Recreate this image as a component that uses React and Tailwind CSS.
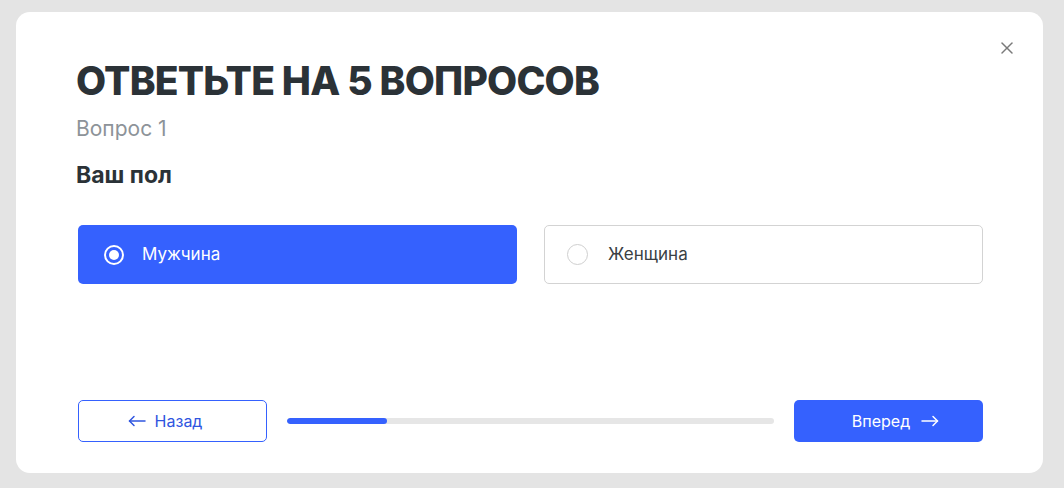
import { X } from 'lucide-react';

function Radio({ checked }) {
  return checked ? (
    <span className="w-[20px] h-[20px] rounded-full border-2 border-white flex items-center justify-center">
      <span className="w-[10px] h-[10px] rounded-full bg-white" />
    </span>
  ) : (
    <span className="w-[21px] h-[21px] rounded-full border border-[#cfcfcf] bg-white" />
  );
}

function Option({ label, checked }) {
  return (
    <button
      className={
        checked
          ? 'h-[59px] rounded-[5px] bg-[#3561fe] text-white flex items-center gap-[18px] pl-[26px] text-[17px]'
          : 'h-[59px] rounded-[5px] bg-white border border-[#d3d3d3] text-[#3a3f44] flex items-center gap-[20px] pl-[22px] text-[17px]'
      }
    >
      <Radio checked={checked} />
      <span>{label}</span>
    </button>
  );
}

function Arrow({ left }) {
  return (
    <svg width="18" height="12" viewBox="0 0 18 12" fill="none" stroke="currentColor" strokeWidth="1.5" strokeLinecap="round" strokeLinejoin="round">
      {left ? (
        <>
          <path d="M17 6H1.5" />
          <path d="M6 1.5L1.5 6L6 10.5" />
        </>
      ) : (
        <>
          <path d="M1 6h15.5" />
          <path d="M12 1.5L16.5 6L12 10.5" />
        </>
      )}
    </svg>
  );
}

export default function App() {
  return (
    <div className="w-[1064px] h-[488px] bg-[#e4e4e4] pt-[12px] pl-[16px] font-['Inter',sans-serif]">
      <div className="relative w-[1027px] h-[461px] bg-white rounded-[14px] pl-[62px] pr-[60px] pt-[48px] flex flex-col">
        <button className="absolute right-[26px] top-[26px] text-[#7a7a7a]">
          <X size={20} strokeWidth={1.8} />
        </button>

        <h1 className="-ml-[2px] text-[39px] leading-[41px] font-extrabold text-[#2b3237] tracking-[-0.8px]">
          ОТВЕТЬТЕ НА 5 ВОПРОСОВ
        </h1>
        <p className="-ml-[2px] mt-[16px] text-[21px] leading-[24px] text-[#8d9399]">Вопрос 1</p>
        <p className="-ml-[2px] mt-[20px] text-[23px] leading-[28px] font-bold text-[#2b3237]">Ваш пол</p>

        <div className="grid grid-cols-2 gap-[27px] mt-[36px]">
          <Option label="Мужчина" checked />
          <Option label="Женщина" />
        </div>

        <div className="mt-auto mb-[31px] flex items-center">
          <button className="w-[189px] h-[42px] rounded-[5px] border border-[#3561fe] text-[#2f55e0] text-[16px] flex items-center justify-center gap-[9px] pr-[15px]">
            <Arrow left />
            <span>Назад</span>
          </button>
          <div className="flex-1 mx-[20px] h-[6px] rounded-full bg-[#e6e6e6] overflow-hidden">
            <div className="w-[20.5%] h-full rounded-full bg-[#3561fe]" />
          </div>
          <button className="w-[189px] h-[42px] rounded-[5px] bg-[#3561fe] text-white text-[16px] flex items-center justify-center gap-[11px] pl-[14px]">
            <span>Вперед</span>
            <Arrow />
          </button>
        </div>
      </div>
    </div>
  );
}
